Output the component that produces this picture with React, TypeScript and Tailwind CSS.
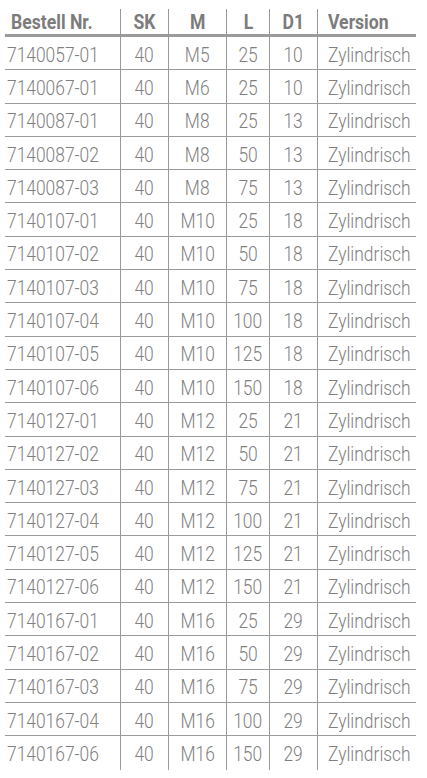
const rows: [string, string, string, string, string][] = [
  ["7140057-01", "40", "M5", "25", "10"],
  ["7140067-01", "40", "M6", "25", "10"],
  ["7140087-01", "40", "M8", "25", "13"],
  ["7140087-02", "40", "M8", "50", "13"],
  ["7140087-03", "40", "M8", "75", "13"],
  ["7140107-01", "40", "M10", "25", "18"],
  ["7140107-02", "40", "M10", "50", "18"],
  ["7140107-03", "40", "M10", "75", "18"],
  ["7140107-04", "40", "M10", "100", "18"],
  ["7140107-05", "40", "M10", "125", "18"],
  ["7140107-06", "40", "M10", "150", "18"],
  ["7140127-01", "40", "M12", "25", "21"],
  ["7140127-02", "40", "M12", "50", "21"],
  ["7140127-03", "40", "M12", "75", "21"],
  ["7140127-04", "40", "M12", "100", "21"],
  ["7140127-05", "40", "M12", "125", "21"],
  ["7140127-06", "40", "M12", "150", "21"],
  ["7140167-01", "40", "M16", "25", "29"],
  ["7140167-02", "40", "M16", "50", "29"],
  ["7140167-03", "40", "M16", "75", "29"],
  ["7140167-04", "40", "M16", "100", "29"],
  ["7140167-06", "40", "M16", "150", "29"],
];

const grid = "grid grid-cols-[115px_48px_58px_43px_48px_99px]";

export default function App() {
  return (
    <div className="w-[427px] min-h-[778px] bg-white font-['Roboto',sans-serif] text-[20px] leading-none">
      <div className="ml-[5px] w-[411px]">
        {/* Header */}
        <div className={`${grid} pt-[9px] font-bold text-[#7c7c7c]`}>
          <div className="h-[25px] pl-[6px] flex items-center">
            <span className="inline-block origin-left scale-x-[0.88] whitespace-nowrap">Bestell Nr.</span>
          </div>
          {["SK", "M", "L", "D1"].map((h) => (
            <div key={h} className="h-[25px] border-l border-[#9a9a9a] flex items-center justify-center">
              <span className="inline-block scale-x-[0.88]">{h}</span>
            </div>
          ))}
          <div className="h-[25px] border-l border-[#9a9a9a] pl-[10px] flex items-center">
            <span className="inline-block origin-left scale-x-[0.88]">Version</span>
          </div>
        </div>
        <div className="h-[3px] bg-[#9a9a9a]" />

        {/* Rows */}
        {rows.map((r, i) => (
          <div
            key={r[0]}
            className={`${grid} h-[33.3px] font-light text-[#808080] ${i < rows.length - 1 ? "border-b border-[#9a9a9a]" : ""}`}
          >
            <div className="pl-[2px] pt-[3px] flex items-center">
              <span className="inline-block origin-left scale-x-[0.87] whitespace-nowrap">{r[0]}</span>
            </div>
            {r.slice(1).map((v, j) => (
              <div key={j} className="border-l border-[#9a9a9a] pt-[3px] flex items-center justify-center">
                <span className="inline-block scale-x-[0.87]">{v}</span>
              </div>
            ))}
            <div className="border-l border-[#9a9a9a] pl-[10px] pt-[3px] flex items-center">
              <span className="inline-block origin-left scale-x-[0.87]">Zylindrisch</span>
            </div>
          </div>
        ))}
      </div>
    </div>
  );
}
